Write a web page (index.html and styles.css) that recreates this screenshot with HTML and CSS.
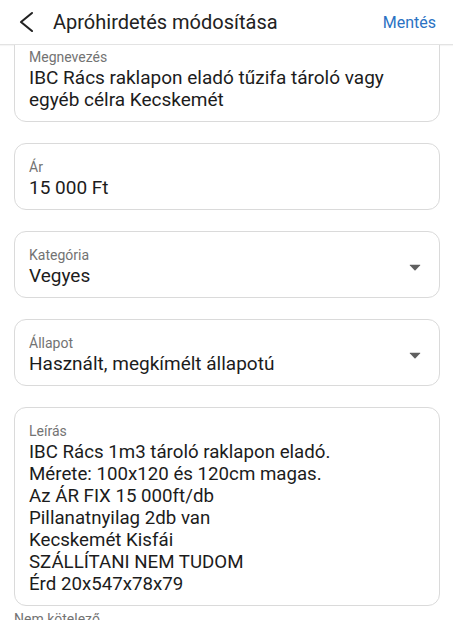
FILE: index.html
```html
<!DOCTYPE html>
<html lang="hu">
<head>
<meta charset="utf-8">
<title>Apróhirdetés módosítása</title>
<link rel="stylesheet" href="styles.css">
</head>
<body>
<div class="page">
  <header class="topbar">
    <button class="back" aria-label="Vissza">
      <svg width="24" height="24" viewBox="0 0 24 24"><path d="M20 3 L9 12 L20 21" fill="none" stroke="#222" stroke-width="2.1" stroke-linecap="round" stroke-linejoin="round"/></svg>
    </button>
    <h1 class="title">Apróhirdetés módosítása</h1>
    <span class="save">Mentés</span>
  </header>
  <main class="content">
    <div class="scroll">
      <div class="field">
        <div class="field-body">
          <div class="label">Megnevezés</div>
          <div class="value">IBC Rács raklapon eladó tűzifa tároló vagy egyéb célra Kecskemét</div>
        </div>
      </div>
      <div class="field">
        <div class="field-body">
          <div class="label">Ár</div>
          <div class="value">15 000 Ft</div>
        </div>
      </div>
      <div class="field select">
        <div class="field-body">
          <div class="label">Kategória</div>
          <div class="value">Vegyes</div>
        </div>
        <svg class="caret" width="12" height="7" viewBox="0 0 12 7"><path d="M1 0.8 H11 Q11.6 0.8 11.2 1.3 L6.5 6.2 Q6 6.7 5.5 6.2 L0.8 1.3 Q0.4 0.8 1 0.8 Z" fill="#5f5f5f"/></svg>
      </div>
      <div class="field select">
        <div class="field-body">
          <div class="label">Állapot</div>
          <div class="value">Használt, megkímélt állapotú</div>
        </div>
        <svg class="caret" width="12" height="7" viewBox="0 0 12 7"><path d="M1 0.8 H11 Q11.6 0.8 11.2 1.3 L6.5 6.2 Q6 6.7 5.5 6.2 L0.8 1.3 Q0.4 0.8 1 0.8 Z" fill="#5f5f5f"/></svg>
      </div>
      <div class="field">
        <div class="field-body">
          <div class="label">Leírás</div>
          <div class="value desc">IBC Rács 1m3 tároló raklapon eladó.<br>Mérete: 100x120 és 120cm magas.<br>Az ÁR FIX 15 000ft/db<br>Pillanatnyilag 2db van<br>Kecskemét Kisfái<br>SZÁLLÍTANI NEM TUDOM<br>Érd 20x547x78x79</div>
        </div>
      </div>
      <div class="hint">Nem kötelező</div>
    </div>
  </main>
</div>
</body>
</html>
```

FILE: styles.css
```css
html, body {
  margin: 0;
  padding: 0;
  background: #ffffff;
  overflow: hidden;
}

body {
  font-family: Roboto, "Noto Sans", "Liberation Sans", sans-serif;
  color: #1f1f1f;
}

.page {
  width: 453px;
  height: 620px;
  display: flex;
  flex-direction: column;
  overflow: hidden;
}

.topbar {
  flex: none;
  height: 44px;
  display: flex;
  align-items: center;
  padding: 0 17px 0 12px;
  border-bottom: 1px solid #e3e3e3;
  box-shadow: 0 1px 1px rgba(0, 0, 0, 0.04);
  background: #ffffff;
}

.back {
  border: 0;
  background: none;
  padding: 0;
  margin: 0;
  width: 24px;
  height: 24px;
  display: flex;
}

.title {
  margin: 0 0 0 17px;
  flex: 1;
  font-size: 20px;
  font-weight: 400;
  color: #222222;
}

.save {
  font-size: 16px;
  color: #2a72c3;
}

.content {
  flex: 1;
  overflow: hidden;
}

.scroll {
  margin-top: -12px;
  padding: 0 13px 0 14px;
  display: flex;
  flex-direction: column;
  gap: 21px;
}

.field {
  border: 1px solid #dadada;
  border-radius: 12px;
  padding: 14px 14px 10px 14px;
  display: flex;
  align-items: center;
  background: #ffffff;
}

.field-body {
  flex: 1;
  min-width: 0;
}

.label {
  font-size: 14px;
  line-height: 19px;
  color: #737373;
}

.value {
  font-size: 19px;
  line-height: 22px;
  color: #1c1c1c;
}

.value.desc {
  font-size: 18.7px;
  line-height: 22px;
}

.caret {
  flex: none;
  margin-right: 4px;
  margin-top: 2px;
}

.hint {
  margin-top: -17px;
  font-size: 14px;
  line-height: 18px;
  color: #737373;
}
```
